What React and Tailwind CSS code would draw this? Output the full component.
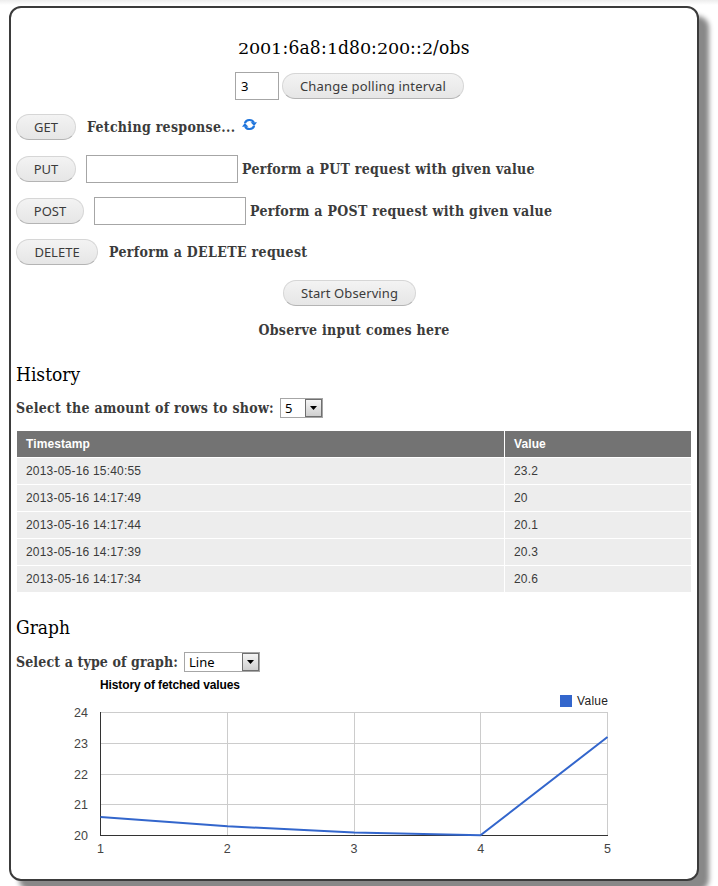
import React from 'react';

const serif = "font-['DejaVu_Serif_Condensed','DejaVu_Serif',serif]";

function Label({ children, className = 'tracking-[0.3px]' }) {
  return (
    <span className={`font-['DejaVu_Serif_Condensed','DejaVu_Serif',serif] whitespace-nowrap text-[14px] font-bold leading-5 text-[#3b3b3b] ${className}`}>
      {children}
    </span>
  );
}

function Button({ children, className = '' }) {
  return (
    <button className={`flex h-[26px] shrink-0 items-center justify-center whitespace-nowrap rounded-full border border-[#d6d6d6] border-b-[#b4b4b4] bg-linear-to-b from-[#f3f3f3] to-[#e6e6e6] pt-px font-['Noto_Sans',sans-serif] text-[13px] text-[#3b3b3b] ${className}`}>
      {children}
    </button>
  );
}

function Input({ className = '', value = '' }) {
  return (
    <input
      readOnly
      value={value}
      className={`h-7 shrink-0 border border-[#a6a6a6] bg-white px-[5px] font-['Noto_Sans',sans-serif] text-[13px] text-black ${className}`}
    />
  );
}

function Select({ children, className = '' }) {
  return (
    <div className={`flex h-5 items-center justify-between border border-[#a6a6a6] bg-white font-['Noto_Sans',sans-serif] text-[13px] text-black ${className}`}>
      <span className="pl-1 leading-[18px]">{children}</span>
      <span className="flex h-[18px] w-[17px] items-center justify-center border border-[#6f6f6f] bg-linear-to-b from-[#f5f5f5] to-[#cfcfcf]">
        <svg width="7" height="4" viewBox="0 0 7 4"><path d="M0 0H7L3.5 4Z" /></svg>
      </span>
    </div>
  );
}

function RefreshIcon() {
  return (
    <svg className="mb-[5px] ml-[7px]" width="15" height="13" viewBox="0 0 15 13" fill="none" stroke="#1f75dc" strokeWidth="2.2">
      <path d="M2.9 5.2A4.8 4.6 0 0 1 11.8 4.6" />
      <path d="M12.1 7.8A4.8 4.6 0 0 1 3.2 8.4" />
      <path d="M8.6 4.2H15L12.2 8Z" fill="#1f75dc" stroke="none" />
      <path d="M0 8.8H6.4L2.8 5Z" fill="#1f75dc" stroke="none" />
    </svg>
  );
}

// Digits 0, 1 and 2 are wide and sit at x-height, as old-style figures do.
function OldStyle({ text }) {
  return text.split('').map((c, i) => (
    <span key={i} className={'012'.includes(c) ? 'inline-block w-[11px] scale-x-140 text-center text-[14px]' : 'tracking-[0.2px]'}>{c}</span>
  ));
}

const rows = [
  ['2013-05-16 15:40:55', '23.2'],
  ['2013-05-16 14:17:49', '20'],
  ['2013-05-16 14:17:44', '20.1'],
  ['2013-05-16 14:17:39', '20.3'],
  ['2013-05-16 14:17:34', '20.6'],
];

function Chart() {
  return (
    <svg className="block" width="676" height="188" viewBox="16 672 676 188" fontFamily="Liberation Sans, Arial, sans-serif" fontSize="12.5" fill="#444">
      <text x="100" y="689" fontSize="12" fontWeight="bold" fill="#000" textLength="140">History of fetched values</text>
      <rect x="560" y="695" width="12" height="12" fill="#3366cc" />
      <text x="577" y="705" fontSize="12" fill="#222" textLength="31">Value</text>
      <g stroke="#ccc" shapeRendering="crispEdges">
        {[712.5, 743.5, 774.5, 804.5].map((y) => <path key={y} d={`M100 ${y}H608`} />)}
        {[227.5, 354.5, 480.5, 607.5].map((x) => <path key={x} d={`M${x} 712V836`} />)}
      </g>
      <path d="M100.5 712V835.5H608" fill="none" stroke="#333" shapeRendering="crispEdges" />
      <path d="M100.5 817L227.5 826.3L354 832.4L480.5 835.3L607.5 737" fill="none" stroke="#3366cc" strokeWidth="2" />
      {[24, 23, 22, 21, 20].map((v, i) => <text key={v} x="88" y={717 + i * 30.75} textAnchor="end">{v}</text>)}
      {[1, 2, 3, 4, 5].map((v, i) => <text key={v} x={100.5 + i * 126.75} y="853" textAnchor="middle">{v}</text>)}
    </svg>
  );
}

export default function App() {
  return (
    <div className="h-[886px] w-[718px] overflow-hidden bg-white bg-linear-to-b from-[#ededed] to-white bg-[length:100%_5px] bg-no-repeat pl-[9px] pt-[6px]">
      <main className="flex h-[875px] w-[690px] flex-col rounded-[12px] border-2 border-[#3b3b3b] bg-white px-[5px] shadow-[10px_10px_5px_#888]">
        <h1 className={`${serif} mt-6 flex h-[30px] items-baseline justify-center text-[19px] leading-[30px] text-black`}>
          <OldStyle text="2001:6a8:1d80:200::2/obs" />
        </h1>
        <div className="mt-[10px] flex h-7 items-center pl-[219px]">
          <Input value="3" className="w-[44px]" />
          <Button className="ml-[3px] w-[182px] tracking-[0.2px]">Change polling interval</Button>
        </div>
        <div className="mt-[13px] flex h-7 items-center">
          <Button className="w-[60px]">GET</Button>
          <Label className="ml-[11px] tracking-[0.3px]">Fetching response...</Label>
          <RefreshIcon />
        </div>
        <div className="mt-[14px] flex h-7 items-center">
          <Button className="w-[60px]">PUT</Button>
          <Input className="ml-[10px] w-[152px]" />
          <Label className="ml-1 tracking-[0.3px]">Perform a PUT request with given value</Label>
        </div>
        <div className="mt-[14px] flex h-7 items-center">
          <Button className="w-[68px]">POST</Button>
          <Input className="ml-[10px] w-[152px]" />
          <Label className="ml-1 tracking-[0.3px]">Perform a POST request with given value</Label>
        </div>
        <div className="mt-[13px] flex h-7 items-center">
          <Button className="w-[82px]">DELETE</Button>
          <Label className="ml-[11px] tracking-[0.34px]">Perform a DELETE request</Label>
        </div>
        <div className="mt-[13px] flex h-7 items-center pl-[267px]">
          <Button className="w-[133px] tracking-[0.1px]">Start Observing</Button>
        </div>
        <div className="mt-[13px] flex h-5 justify-center">
          <Label>Observe input comes here</Label>
        </div>
        <h2 className={`${serif} mt-[19px] h-[30px] text-[19px] leading-[30px] text-black`}>History</h2>
        <div className="mt-[9px] flex h-5 items-center">
          <Label className="w-[264px] tracking-[0.3px]">Select the amount of rows to show:</Label>
          <Select className="w-[43px]">5</Select>
        </div>
        <div className="mt-[13px] ml-px grid w-[674px] shrink-0 grid-cols-[487px_186px] gap-px font-['Liberation_Sans',Arial,sans-serif] text-[12px] leading-[26px] text-[#3b3b3b] *:h-[26px] *:pl-[9px]">
          <div className="bg-[#737373] font-bold tracking-[0.1px] text-white">Timestamp</div>
          <div className="bg-[#737373] font-bold tracking-[0.1px] text-white">Value</div>
          {rows.flat().map((cell) => <div key={cell} className="bg-[#ededed] tracking-[0.2px]">{cell}</div>)}
        </div>
        <h2 className={`${serif} mt-[20px] h-[30px] text-[19px] leading-[30px] text-black`}>Graph</h2>
        <div className="mt-[10px] flex h-5 items-center">
          <Label className="w-[168px] tracking-[0.13px]">Select a type of graph:</Label>
          <Select className="w-[76px]">Line</Select>
        </div>
        <Chart />
      </main>
    </div>
  );
}
